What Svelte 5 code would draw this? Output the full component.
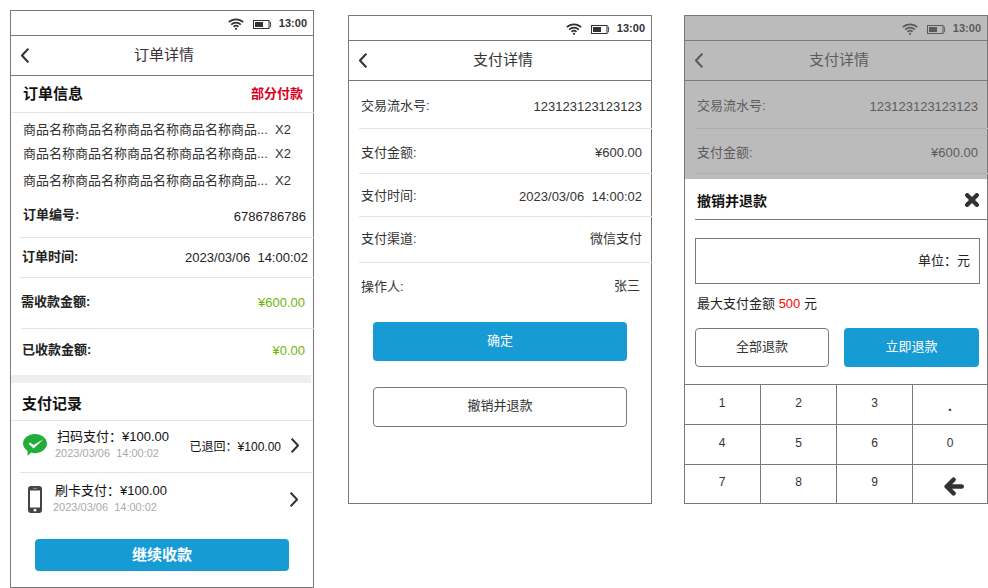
<script>
  const items = ['商品名称商品名称商品名称商品名称商品...', '商品名称商品名称商品名称商品名称商品...', '商品名称商品名称商品名称商品名称商品...'];

  const orderRows = [
    { cls: 'no', label: '订单编号:', value: '6786786786' },
    { cls: 'time', label: '订单时间:', value: '2023/03/06  14:00:02' },
    { cls: 'need', label: '需收款金额:', value: '¥600.00' },
    { cls: 'paid', label: '已收款金额:', value: '¥0.00' }
  ];

  const payRows = [
    { cls: 'd1', label: '交易流水号:', value: '123123123123123' },
    { cls: 'd2', label: '支付金额:', value: '¥600.00' },
    { cls: 'd3', label: '支付时间:', value: '2023/03/06  14:00:02' },
    { cls: 'd4', label: '支付渠道:', value: '微信支付', cjk: true },
    { cls: 'd5', label: '操作人:', value: '张三', cjk: true }
  ];

  const keys = ['1', '2', '3', '.', '4', '5', '6', '0', '7', '8', '9'];
</script>

{#snippet status()}
  <div class="status">
    <svg class="wifi" width="16" height="12" viewBox="0 0 16 12" fill="none" stroke="#333" stroke-width="1.7">
      <path d="M0.8 4.2 A10.4 10.4 0 0 1 15.2 4.2" />
      <path d="M3.2 6.6 A7 7 0 0 1 12.8 6.6" />
      <path d="M5.5 8.9 A3.6 3.6 0 0 1 10.5 8.9" />
      <circle cx="8" cy="10.8" r="1.1" fill="#333" stroke="none" />
    </svg>
    <svg class="battery" width="19" height="9" viewBox="0 0 19 9" fill="none">
      <rect x="0.5" y="0.5" width="15.5" height="8" stroke="#333" />
      <rect x="2" y="2" width="8" height="5" fill="#333" />
      <path d="M17 1.5 Q18.5 4.5 17 7.5" stroke="#333" />
    </svg>
    <span class="clock">13:00</span>
  </div>
{/snippet}

{#snippet nav(title)}
  <div class="nav">
    <svg width="8" height="15" viewBox="0 0 8 15" fill="none" stroke="#333" stroke-width="2">
      <path d="M7.3 0.7 L1 7.5 L7.3 14.3" />
    </svg>
    <span class="nav-title">{title}</span>
  </div>
{/snippet}

{#snippet chevron()}
  <svg class="chev" width="8" height="15" viewBox="0 0 8 15" fill="none" stroke="#333" stroke-width="2">
    <path d="M0.7 0.7 L7 7.5 L0.7 14.3" />
  </svg>
{/snippet}

{#snippet details(rows)}
  {#each rows as row}
    <div class="drow {row.cls}">
      <span class="cjk">{row.label}</span>
      <span class="pre" class:cjk={row.cjk}>{row.value}</span>
    </div>
  {/each}
{/snippet}

<div class="page">
  <section class="phone order">
    {@render status()}
    {@render nav('订单详情')}

    <div class="head">
      <span class="h-title cjk">订单信息</span>
      <span class="state cjk">部分付款</span>
    </div>

    <div class="items">
      {#each items as name}
        <div class="item">
          <span class="item-name">{name}</span>
          <span>X2</span>
        </div>
      {/each}
    </div>

    {#each orderRows as row}
      <div class="orow {row.cls}">
        <span class="olabel">{row.label}</span>
        <span class="pre oval">{row.value}</span>
      </div>
    {/each}

    <div class="band"></div>
    <div class="rec-title">支付记录</div>

    <div class="rec rec1">
      <svg class="rec-icon" width="24" height="22" viewBox="0 0 24 22">
        <path d="M12 0 C18.6 0 24 4.3 24 9.6 C24 14.9 18.6 19.2 12 19.2 C10.6 19.2 9.3 19 8.1 18.6 L4.6 22 L4.6 16.9 C1.8 15.1 0 12.5 0 9.6 C0 4.3 5.4 0 12 0 Z" fill="#22ac38" />
        <path d="M5.6 9.8 L7.2 8.6 L10.6 11 L20.4 5.2 L10.6 14.6 Z" fill="#fff" />
      </svg>
      <div class="rec-text">
        <div class="rec-main">扫码支付：¥100.00</div>
        <div class="rec-sub">2023/03/06  14:00:02</div>
      </div>
      <div class="rec-right">
        <span>已退回：¥100.00</span>
        {@render chevron()}
      </div>
    </div>

    <div class="rec rec2">
      <svg class="rec-icon" width="14" height="27" viewBox="0 0 14 27">
        <rect width="14" height="27" rx="3" fill="#444" />
        <rect x="2" y="4.5" width="10" height="17" fill="#fff" />
        <circle cx="7" cy="24.2" r="1.4" fill="#fff" />
        <rect x="5" y="1.8" width="4" height="1" fill="#999" />
      </svg>
      <div class="rec-text">
        <div class="rec-main">刷卡支付：¥100.00</div>
        <div class="rec-sub">2023/03/06  14:00:02</div>
      </div>
      <div class="rec-right">
        {@render chevron()}
      </div>
    </div>

    <button class="btn primary go">继续收款</button>
  </section>

  <section class="phone pay">
    {@render status()}
    {@render nav('支付详情')}
    {@render details(payRows)}
    <button class="btn primary wide">确定</button>
    <button class="btn outline wide second">撤销并退款</button>
  </section>

  <section class="phone refund">
    {@render status()}
    {@render nav('支付详情')}
    {@render details(payRows.slice(0, 2))}

    <div class="mask"></div>

    <div class="sheet">
      <div class="sheet-head">
        <span>撤销并退款</span>
        <svg class="close" width="14" height="14" viewBox="0 0 14 14" fill="none" stroke="#333" stroke-width="4.4" stroke-linecap="round">
          <path d="M2.2 2.2 L11.8 11.8 M11.8 2.2 L2.2 11.8" />
        </svg>
      </div>
      <div class="amount"><span class="cjk">单位：元</span></div>
      <div class="hint">最大支付金额 <span class="red">500</span> 元</div>
      <div class="actions">
        <button class="btn outline all">全部退款</button>
        <button class="btn primary now">立即退款</button>
      </div>
      <div class="keypad">
        {#each keys as key}
          <div class="key" class:dot={key === '.'}>{key}</div>
        {/each}
        <div class="key">
          <svg class="back" width="20" height="19" viewBox="0 0 20 19" fill="none" stroke="#333" stroke-width="4.4" stroke-linecap="round" stroke-linejoin="round">
            <path d="M17.8 9.5 L3 9.5 M9.6 2.6 L2.6 9.5 L9.6 16.4" />
          </svg>
        </div>
      </div>
    </div>
  </section>
</div>

<style>
  :global(body) {
    margin: 0;
    background: #fff;
  }

  .page {
    display: flex;
    align-items: flex-start;
    width: 988px;
    height: 588px;
    overflow: hidden;
    padding-left: 10px;
    box-sizing: border-box;
    font-family: "Liberation Sans", "Noto Sans CJK SC", sans-serif;
    font-size: 13px;
    color: #222;
  }

  .phone {
    flex: none;
    position: relative;
    width: 304px;
    box-sizing: border-box;
    border: 1px solid #797979;
    background: #fff;
    display: flex;
    flex-direction: column;
  }

  .order {
    height: 578px;
    margin-top: 10px;
  }

  .pay {
    height: 489px;
    margin-top: 15px;
    margin-left: 34px;
  }

  .refund {
    height: 489px;
    margin-top: 15px;
    margin-left: 32px;
  }

  /* CJK glyphs sit low in the line box, lift them a little */
  .cjk {
    padding-bottom: 3px;
  }

  /* status and nav bars */
  .status {
    height: 25px;
    box-sizing: border-box;
    border-bottom: 1px solid #797979;
    display: flex;
    align-items: center;
    justify-content: flex-end;
    padding-right: 6px;
  }

  .wifi {
    margin-top: 2px;
  }

  .battery {
    margin-left: 9px;
    margin-top: 2px;
    margin-right: 7px;
  }

  .clock {
    font-size: 11px;
    font-weight: 700;
    color: #333;
  }

  .nav {
    height: 40px;
    box-sizing: border-box;
    border-bottom: 1px solid #797979;
    display: flex;
    align-items: center;
    padding-left: 10px;
  }

  .nav-title {
    margin-left: 105px;
    padding-bottom: 4px;
    font-size: 15px;
    color: #333;
  }

  .pay .nav-title,
  .refund .nav-title {
    margin-left: 106px;
  }

  /* order page */
  .head {
    height: 37px;
    box-sizing: border-box;
    margin-left: 1px;
    margin-right: -1px;
    padding: 0 11px 0 11px;
    border-bottom: 1px solid #e4e4e4;
    display: flex;
    align-items: center;
    justify-content: space-between;
  }

  .h-title {
    font-size: 15px;
    font-weight: 700;
    color: #111;
  }

  .state {
    font-weight: 700;
    color: #d9001b;
  }

  .items {
    padding: 5px 0 0 12px;
    height: 80px;
    box-sizing: border-box;
  }

  .item {
    display: flex;
    line-height: 24px;
    color: #333;
  }

  .item:last-child {
    margin-top: 3px;
  }

  .item-name {
    width: 252px;
  }

  .orow {
    box-sizing: border-box;
    margin-right: -1px;
    display: flex;
    align-items: center;
    justify-content: space-between;
    border-bottom: 1px solid #e4e4e4;
  }

  .olabel {
    padding-bottom: 4px;
    font-weight: 700;
  }

  .pre {
    white-space: pre;
  }

  .no {
    height: 45px;
    margin-left: 9px;
    padding: 0 8px 0 3px;
  }

  .no .oval {
    padding-top: 3px;
  }

  .time {
    height: 40px;
    margin-left: 9px;
    padding: 0 6px 0 2px;
  }

  .need {
    height: 51px;
    margin-left: 10px;
    padding: 0 9px 2px 0;
  }

  .paid {
    height: 46px;
    margin-left: 10px;
    padding: 0 9px 3px 1px;
    border-bottom: none;
  }

  .need .oval,
  .paid .oval {
    color: #70b603;
  }

  .band {
    height: 8px;
    margin-right: 2px;
    background: #eee;
  }

  .rec-title {
    height: 38px;
    box-sizing: border-box;
    padding: 1px 0 0 11px;
    border-bottom: 1px solid #e4e4e4;
    display: flex;
    align-items: center;
    font-size: 15px;
    font-weight: 700;
    color: #111;
  }

  .rec {
    display: flex;
    align-items: center;
    box-sizing: border-box;
    margin-left: 9px;
    margin-right: 1px;
  }

  .rec1 {
    height: 52px;
    padding: 0 13px 3px 3px;
    border-bottom: 1px solid #e4e4e4;
  }

  .rec2 {
    height: 52px;
    padding: 0 14px 0 8px;
  }

  .rec-icon {
    flex: none;
  }

  .rec1 .rec-text {
    margin-left: 8px;
  }

  .rec2 .rec-text {
    margin-left: 11px;
  }

  .rec-main {
    padding-left: 2px;
    line-height: 16px;
    color: #111;
  }

  .rec-sub {
    font-size: 11px;
    line-height: 16px;
    white-space: pre;
    color: #aaa;
  }

  .rec-right {
    margin-left: auto;
    display: flex;
    align-items: center;
    gap: 10px;
    font-size: 12px;
    color: #111;
  }

  .chev {
    flex: none;
  }

  /* buttons */
  .btn {
    box-sizing: border-box;
    padding: 0 0 4px;
    border-radius: 4px;
    font: inherit;
    cursor: pointer;
  }

  .primary {
    border: none;
    background: #169bd5;
    color: #fff;
  }

  .outline {
    border: 1px solid #797979;
    background: #fff;
    color: #333;
  }

  .go {
    width: 254px;
    height: 32px;
    margin: 14px 0 0 24px;
    font-size: 15px;
    font-weight: 700;
  }

  .wide {
    width: 254px;
    margin-left: 24px;
    height: 39px;
    margin-top: 13px;
  }

  .second {
    height: 40px;
    margin-top: 26px;
    padding-bottom: 6px;
  }

  /* payment details */
  .drow {
    box-sizing: border-box;
    margin-left: 10px;
    margin-right: -1px;
    padding: 0 10px 0 2px;
    display: flex;
    align-items: center;
    justify-content: space-between;
    border-bottom: 1px solid #e4e4e4;
    color: #333;
  }

  .d1 {
    height: 48px;
    padding-top: 3px;
  }

  .d2 {
    height: 45px;
    padding-top: 3px;
  }

  .d3 {
    height: 43px;
    padding-top: 2px;
  }

  .d4 {
    height: 46px;
    padding-bottom: 2px;
  }

  .d5 {
    height: 46px;
    padding-right: 12px;
    border-bottom: none;
  }

  .d5 .cjk:first-child {
    padding-bottom: 1px;
  }

  /* refund sheet */
  .mask {
    position: absolute;
    inset: 0;
    background: rgba(127, 127, 127, 0.53);
  }

  .sheet {
    position: absolute;
    left: 0;
    right: 0;
    bottom: 0;
    top: 163px;
    background: #fff;
    display: flex;
    flex-direction: column;
  }

  .sheet-head {
    height: 41px;
    box-sizing: border-box;
    margin-left: 10px;
    padding: 2px 8px 0 2px;
    border-bottom: 1px solid #797979;
    display: flex;
    align-items: center;
    justify-content: space-between;
    font-size: 14px;
    font-weight: 700;
    color: #111;
  }

  .amount {
    width: 285px;
    height: 46px;
    box-sizing: border-box;
    margin: 18px 0 0 10px;
    padding-right: 9px;
    border: 1px solid #797979;
    display: flex;
    align-items: center;
    justify-content: flex-end;
  }

  .hint {
    margin: 11px 0 0 12px;
    line-height: 18px;
  }

  .red {
    color: #f00;
  }

  .actions {
    display: flex;
    gap: 15px;
    margin: 15px 0 0 10px;
  }

  .all,
  .now {
    height: 39px;
  }

  .all {
    width: 134px;
  }

  .now {
    width: 135px;
  }

  .keypad {
    margin-top: auto;
    margin-left: -1px;
    display: grid;
    grid-template-columns: 77px 76px 76px 1fr;
    grid-template-rows: 40px 40px 39px;
  }

  .key {
    box-sizing: border-box;
    border-top: 1px solid #797979;
    border-right: 1px solid #797979;
    display: flex;
    align-items: center;
    justify-content: center;
    padding-bottom: 4px;
    font-size: 12px;
    color: #333;
  }

  .key:nth-child(4n) {
    border-right: none;
  }

  .key.dot {
    padding: 0;
    padding-top: 3px;
    font-size: 14px;
    font-weight: 700;
  }

  .back {
    margin: 8px 0 0 8px;
  }
</style>
